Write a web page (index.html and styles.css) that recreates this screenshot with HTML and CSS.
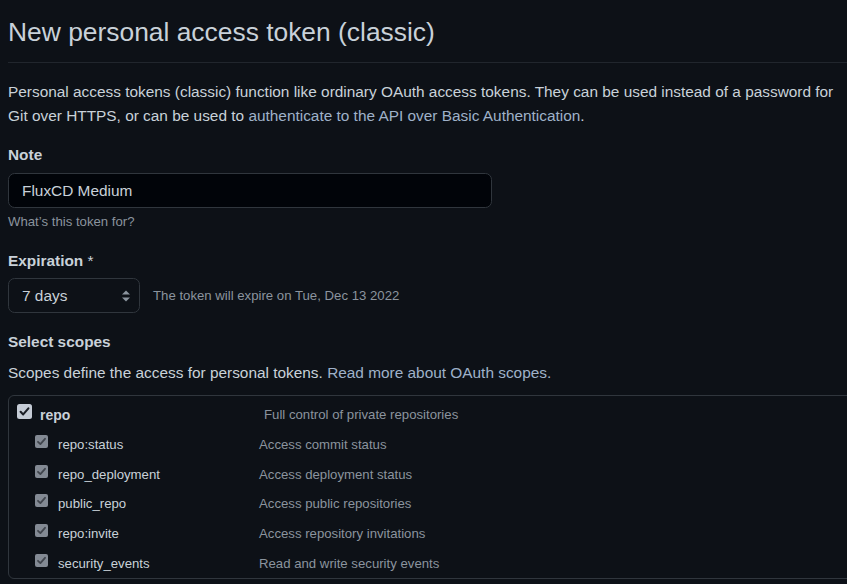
FILE: index.html
```html
<!DOCTYPE html>
<html>
<head>
<meta charset="utf-8">
<link rel="stylesheet" href="styles.css">
</head>
<body>
<div class="page">
  <h1 class="title">New personal access token (classic)</h1>
  <p class="intro">Personal access tokens (classic) function like ordinary OAuth access tokens. They can be used instead of a password for Git over HTTPS, or can be used to <a class="link" href="#">authenticate to the API over Basic Authentication</a>.</p>

  <div class="label label-note">Note</div>
  <div class="input">FluxCD Medium</div>
  <div class="hint">What’s this token for?</div>

  <div class="label label-exp">Expiration <span class="req">*</span></div>
  <div class="exp-row">
    <div class="select">
      <span>7 days</span>
      <svg class="arrows" width="10" height="14" viewBox="0 0 10 14"><path d="M1 5.5 L5 1.5 L9 5.5 Z M1 8.5 L5 12.5 L9 8.5 Z" fill="#8b949e"/></svg>
    </div>
    <span class="exp-note">The token will expire on Tue, Dec 13 2022</span>
  </div>

  <div class="label label-scopes">Select scopes</div>
  <p class="scopes-desc">Scopes define the access for personal tokens. <a class="link" href="#">Read more about OAuth scopes.</a></p>

  <div class="scope-box">
    <div class="row row-main">
      <svg class="cb cb-main" width="15" height="15" viewBox="0 0 15 15"><rect x="0" y="0" width="15" height="15" rx="2.5" fill="#c5ccd6"/><path d="M3.6 7.8 L6.2 10.4 L11.4 4.4" stroke="#1b1f26" stroke-width="2.1" fill="none" stroke-linecap="round" stroke-linejoin="round"/></svg>
      <span class="name name-main">repo</span>
      <span class="desc desc-main">Full control of private repositories</span>
    </div>
    <div class="row row-sub">
      <svg class="cb cb-sub" width="13" height="13" viewBox="0 0 13 13"><rect x="0" y="0" width="13" height="13" rx="2" fill="#838a94"/><path d="M3 6.8 L5.4 9.1 L10 3.8" stroke="#40454d" stroke-width="1.8" fill="none" stroke-linecap="round" stroke-linejoin="round"/></svg>
      <span class="name">repo:status</span>
      <span class="desc">Access commit status</span>
    </div>
    <div class="row row-sub">
      <svg class="cb cb-sub" width="13" height="13" viewBox="0 0 13 13"><rect x="0" y="0" width="13" height="13" rx="2" fill="#838a94"/><path d="M3 6.8 L5.4 9.1 L10 3.8" stroke="#40454d" stroke-width="1.8" fill="none" stroke-linecap="round" stroke-linejoin="round"/></svg>
      <span class="name">repo_deployment</span>
      <span class="desc">Access deployment status</span>
    </div>
    <div class="row row-sub">
      <svg class="cb cb-sub" width="13" height="13" viewBox="0 0 13 13"><rect x="0" y="0" width="13" height="13" rx="2" fill="#838a94"/><path d="M3 6.8 L5.4 9.1 L10 3.8" stroke="#40454d" stroke-width="1.8" fill="none" stroke-linecap="round" stroke-linejoin="round"/></svg>
      <span class="name">public_repo</span>
      <span class="desc">Access public repositories</span>
    </div>
    <div class="row row-sub">
      <svg class="cb cb-sub" width="13" height="13" viewBox="0 0 13 13"><rect x="0" y="0" width="13" height="13" rx="2" fill="#838a94"/><path d="M3 6.8 L5.4 9.1 L10 3.8" stroke="#40454d" stroke-width="1.8" fill="none" stroke-linecap="round" stroke-linejoin="round"/></svg>
      <span class="name">repo:invite</span>
      <span class="desc">Access repository invitations</span>
    </div>
    <div class="row row-sub">
      <svg class="cb cb-sub" width="13" height="13" viewBox="0 0 13 13"><rect x="0" y="0" width="13" height="13" rx="2" fill="#838a94"/><path d="M3 6.8 L5.4 9.1 L10 3.8" stroke="#40454d" stroke-width="1.8" fill="none" stroke-linecap="round" stroke-linejoin="round"/></svg>
      <span class="name">security_events</span>
      <span class="desc">Read and write security events</span>
    </div>
  </div>
</div>
</body>
</html>
```

FILE: styles.css
```css
html, body {
  margin: 0;
  padding: 0;
  background: #0d1117;
  overflow: hidden;
}
body {
  font-family: "Liberation Sans", Arial, sans-serif;
  color: #c9d1d9;
  width: 847px;
  height: 584px;
}
.page {
  padding: 16px 0 0 8px;
  width: 839px;
}
.title {
  margin: 0;
  font-size: 26.4px;
  font-weight: 400;
  line-height: 33px;
  padding-bottom: 13px;
  border-bottom: 1px solid #21262d;
  color: #c9d1d9;
}
.intro {
  margin: 17px 0 0;
  font-size: 15.4px;
  line-height: 24px;
  max-width: 830px;
}
.link {
  color: #9fb1c9;
  text-decoration: none;
}
.label {
  font-weight: 700;
  font-size: 15.4px;
  line-height: 24px;
}
.label-note { margin-top: 15px; }
.req { font-weight: 400; }
.input {
  margin-top: 6px;
  box-sizing: border-box;
  width: 484px;
  height: 35px;
  border: 1px solid #30363d;
  border-radius: 6.6px;
  background: #010409;
  padding: 0 13px;
  font-size: 15.4px;
  line-height: 33px;
  color: #c9d1d9;
}
.hint {
  margin-top: 4px;
  font-size: 13.2px;
  line-height: 20px;
  color: #8b949e;
}
.label-exp { margin-top: 17px; }
.exp-row {
  margin-top: 5px;
  display: flex;
  align-items: center;
  gap: 13px;
}
.select {
  box-sizing: border-box;
  width: 132px;
  height: 35px;
  border: 1px solid #30363d;
  border-radius: 6.6px;
  background: #0d1117;
  padding: 0 8px 0 13px;
  display: flex;
  align-items: center;
  justify-content: space-between;
  font-size: 15.4px;
  color: #c9d1d9;
}
.exp-note {
  font-size: 13.2px;
  color: #8b949e;
}
.label-scopes { margin-top: 17px; }
.scopes-desc {
  margin: 7px 0 0;
  font-size: 15.4px;
  line-height: 24px;
}
.scope-box {
  margin-top: 10px;
  border: 1px solid #30363d;
  border-radius: 6px;
  width: 900px;
  padding-top: 4px;
}
.row {
  display: flex;
  align-items: center;
  height: 29.7px;
}
.cb { flex: none; margin-bottom: 6px; }
.row-main .cb { margin-left: 8px; }
.row-sub .cb { margin-left: 26px; }
.name {
  font-size: 13.2px;
  color: #c9d1d9;
  flex: none;
}
.name-main {
  font-weight: 700;
  font-size: 14px;
  margin-left: 8px;
  width: 224px;
}
.row-sub .name {
  margin-left: 10px;
  width: 201px;
}
.desc {
  font-size: 13.2px;
  color: #8b949e;
}
```
